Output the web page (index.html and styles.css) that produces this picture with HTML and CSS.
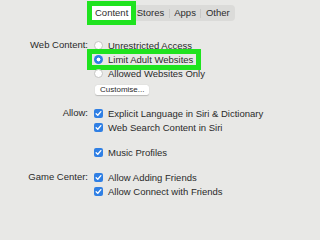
FILE: index.html
```html
<!DOCTYPE html>
<html lang="en">
<head>
<meta charset="utf-8">
<title>Content &amp; Privacy</title>
<link rel="stylesheet" href="styles.css">
</head>
<body>
<div class="page">
  <div class="tabs">
    <span class="seg active">Content</span>
    <span class="sep hidden"></span>
    <span class="seg">Stores</span>
    <span class="sep"></span>
    <span class="seg">Apps</span>
    <span class="sep"></span>
    <span class="seg">Other</span>
  </div>

  <div class="group first">
    <div class="label">Web Content:</div>
    <div class="controls">
      <div class="row"><span class="radio"></span><span>Unrestricted Access</span></div>
      <div class="row"><span class="hl"><span class="radio on"></span><span>Limit Adult Websites</span></span></div>
      <div class="row"><span class="radio"></span><span>Allowed Websites Only</span></div>
      <div class="btn-row"><span class="btn">Customise...</span></div>
    </div>
  </div>

  <div class="group">
    <div class="label">Allow:</div>
    <div class="controls">
      <div class="row"><span class="check"><svg viewBox="0 0 10 10"><path d="M2.4 5.2 L4.2 7 L7.6 2.9"/></svg></span><span>Explicit Language in Siri &amp; Dictionary</span></div>
      <div class="row"><span class="check"><svg viewBox="0 0 10 10"><path d="M2.4 5.2 L4.2 7 L7.6 2.9"/></svg></span><span>Web Search Content in Siri</span></div>
    </div>
  </div>

  <div class="group">
    <div class="label"></div>
    <div class="controls">
      <div class="row"><span class="check"><svg viewBox="0 0 10 10"><path d="M2.4 5.2 L4.2 7 L7.6 2.9"/></svg></span><span>Music Profiles</span></div>
    </div>
  </div>

  <div class="group">
    <div class="label">Game Center:</div>
    <div class="controls">
      <div class="row"><span class="check"><svg viewBox="0 0 10 10"><path d="M2.4 5.2 L4.2 7 L7.6 2.9"/></svg></span><span>Allow Adding Friends</span></div>
      <div class="row"><span class="check"><svg viewBox="0 0 10 10"><path d="M2.4 5.2 L4.2 7 L7.6 2.9"/></svg></span><span>Allow Connect with Friends</span></div>
    </div>
  </div>
</div>
</body>
</html>
```

FILE: styles.css
```css
html, body {
  margin: 0;
  padding: 0;
  background: #e8e8e6;
}

body {
  width: 300px;
  height: 200px;
  overflow: hidden;
  font-family: "Liberation Sans", Arial, sans-serif;
  font-size: 9.5px;
  color: #2a2a2a;
}

.page {
  padding-top: 5px;
}

.tabs {
  display: inline-flex;
  align-items: center;
  margin-left: 91px;
  padding: 1px;
  background: #dbdbd9;
  border-radius: 4px;
}

.seg {
  line-height: 14px;
  padding: 0 4.5px;
  color: #2d2d2d;
}

.seg.active {
  background: #ffffff;
  padding: 0 3px;
  outline: 5px solid #1fe31f;
}

.sep {
  width: 1px;
  height: 9px;
  background: #c9c9c7;
}

.sep.hidden {
  background: transparent;
}

.group {
  display: grid;
  grid-template-columns: 88px 1fr;
  column-gap: 6px;
  margin-top: 11px;
}

.group.first {
  margin-top: 17px;
}

.label {
  text-align: right;
  line-height: 14px;
  white-space: nowrap;
}

.controls {
  display: flex;
  flex-direction: column;
}

.row {
  display: flex;
  align-items: center;
  height: 14px;
  gap: 5px;
  white-space: nowrap;
}

.hl {
  display: inline-flex;
  align-items: center;
  gap: 5px;
  height: 11px;
  margin-left: -2px;
  padding: 0 3px 0 2px;
  outline: 5.5px solid #1fe31f;
}

.radio {
  flex: none;
  width: 9px;
  height: 9px;
  box-sizing: border-box;
  border-radius: 50%;
  background: #ffffff;
  border: 0.5px solid #c4c4c2;
}

.radio.on {
  border: none;
  background: radial-gradient(circle, #ffffff 0 1.7px, #2f7fe4 2.2px);
}

.check {
  flex: none;
  width: 9px;
  height: 9px;
  border-radius: 2px;
  background: #2f7fe4;
  display: flex;
}

.check svg {
  width: 9px;
  height: 9px;
  fill: none;
  stroke: #ffffff;
  stroke-width: 1.5;
  stroke-linecap: round;
  stroke-linejoin: round;
}

.btn-row {
  display: flex;
  margin-top: 5px;
  padding-left: 1px;
}

.btn {
  font-size: 8px;
  line-height: 10px;
  padding: 0 5px;
  background: #ffffff;
  border-radius: 2.5px;
  box-shadow: 0 0.5px 1px rgba(0, 0, 0, 0.2);
  color: #2a2a2a;
}
```
